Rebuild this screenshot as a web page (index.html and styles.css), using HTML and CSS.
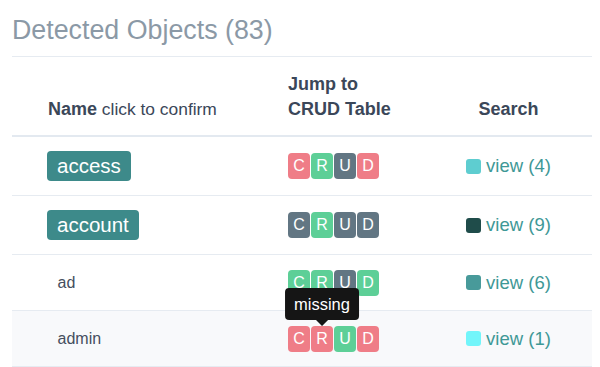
FILE: index.html
```html
<!DOCTYPE html>
<html>
<head>
<meta charset="utf-8">
<link rel="stylesheet" href="styles.css">
</head>
<body>
<div class="panel">
  <h2 class="title">Detected Objects (83)</h2>
  <div class="table">
    <div class="row head">
      <div class="cell name-col"><b>Name</b> click to confirm</div>
      <div class="cell crud-col"><b>Jump to<br>CRUD Table</b></div>
      <div class="cell search-col"><b>Search</b></div>
    </div>

    <div class="row">
      <div class="cell name-col"><span class="name confirmed">access</span></div>
      <div class="cell crud-col">
        <div class="crud"><span class="l red">C</span><span class="l green">R</span><span class="l slate">U</span><span class="l red">D</span></div>
      </div>
      <div class="cell search-col"><span class="sw sw1"></span><span class="view">view (4)</span></div>
    </div>

    <div class="row">
      <div class="cell name-col"><span class="name confirmed">account</span></div>
      <div class="cell crud-col">
        <div class="crud"><span class="l slate">C</span><span class="l green">R</span><span class="l slate">U</span><span class="l slate">D</span></div>
      </div>
      <div class="cell search-col"><span class="sw sw2"></span><span class="view">view (9)</span></div>
    </div>

    <div class="row">
      <div class="cell name-col"><span class="name">ad</span></div>
      <div class="cell crud-col">
        <div class="crud"><span class="l green">C</span><span class="l green">R</span><span class="l slate">U</span><span class="l green">D</span></div>
      </div>
      <div class="cell search-col"><span class="sw sw3"></span><span class="view">view (6)</span></div>
    </div>

    <div class="row hover">
      <div class="cell name-col"><span class="name">admin</span></div>
      <div class="cell crud-col">
        <div class="crud"><span class="l red">C</span><span class="l red has-tip">R<span class="tip">missing</span></span><span class="l green">U</span><span class="l red">D</span></div>
      </div>
      <div class="cell search-col"><span class="sw sw4"></span><span class="view">view (1)</span></div>
    </div>
  </div>
</div>
</body>
</html>
```
FILE: styles.css
```css
body {
  margin: 0;
  background: #fff;
  font-family: "Liberation Sans", Arial, sans-serif;
}

.panel {
  padding: 0 8px 0 12px;
}

.title {
  margin: 0;
  padding: 15px 0 11px;
  font-size: 26.8px;
  line-height: 30px;
  font-weight: normal;
  color: #8b99a6;
  border-bottom: 1px solid #e6ebf1;
}

.row {
  display: grid;
  grid-template-columns: 276px 137px 1fr;
  align-items: center;
  border-bottom: 1px solid #e6ebf1;
}

.row.hover {
  background: #f8f9fb;
}

.cell {
  padding: 14px 0;
}

.name-col {
  padding-left: 35px;
}

.head {
  align-items: end;
  border-bottom: 2px solid #e3e9f0;
}

.head .cell {
  padding: 15px 0 13px;
  font-size: 17.4px;
  line-height: 25px;
  color: #3b4759;
}

.head b {
  font-size: 18px;
}

.head .name-col {
  padding-left: 36px;
}

.head .search-col {
  text-align: center;
}

.name {
  display: inline-block;
  padding: 0 10.5px;
  font-size: 16px;
  line-height: 27px;
  color: #454e5e;
  border-radius: 4px;
  vertical-align: top;
}

.name.confirmed {
  padding: 0 10px;
  font-size: 20.5px;
  line-height: 30px;
  height: 30px;
  color: #fff;
  background: #3d8a8a;
}

.crud {
  display: flex;
  gap: 1px;
}

.l {
  position: relative;
  width: 22px;
  height: 26px;
  line-height: 26px;
  text-align: center;
  font-size: 16px;
  color: #fff;
  border-radius: 4px;
}

.red { background: #ef7d87; }
.green { background: #5dcf97; }
.slate { background: #627683; }

.tip {
  position: absolute;
  bottom: calc(100% + 6px);
  left: 50%;
  transform: translateX(-50%);
  z-index: 5;
  padding: 0 9px;
  height: 32px;
  line-height: 32px;
  font-size: 16.5px;
  white-space: nowrap;
  color: #fff;
  background: #151515;
  border-radius: 4px;
}

.tip::after {
  content: "";
  position: absolute;
  top: 100%;
  left: 50%;
  margin-left: -6px;
  border: 6px solid transparent;
  border-top-color: #151515;
  border-bottom-width: 0;
}

.search-col {
  display: flex;
  justify-content: center;
  align-items: center;
  gap: 5px;
}

.sw {
  width: 15px;
  height: 15px;
  border-radius: 3px;
}

.sw1 { background: #5ecdd0; }
.sw2 { background: #1f4c4a; }
.sw3 { background: #489a9a; }
.sw4 { background: #72f5fa; }

.view {
  font-size: 18.5px;
  line-height: 22px;
  color: #3e9896;
}
```
